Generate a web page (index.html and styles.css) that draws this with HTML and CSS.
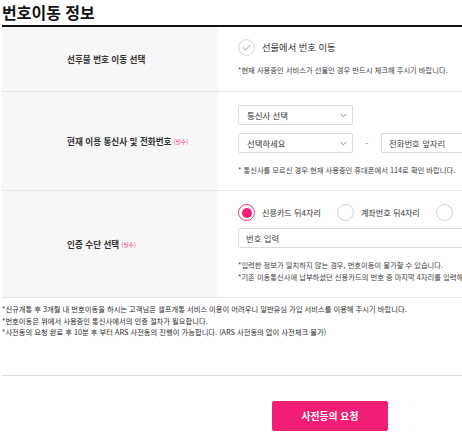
FILE: index.html
```html
<!DOCTYPE html>
<html lang="ko">
<head>
<meta charset="utf-8">
<title>번호이동 정보</title>
<link rel="stylesheet" href="styles.css">
</head>
<body>
<div class="page">
  <h2 class="title">번호이동 정보</h2>
  <div class="table">
    <div class="row">
      <div class="th">선후불 번호 이동 선택</div>
      <div class="td td-1">
        <div class="check">
          <svg class="check-icon" width="17" height="17" viewBox="0 0 17 17"><circle cx="8.5" cy="8.5" r="7.8" fill="#fff" stroke="#d4d4d4" stroke-width="1"/><path d="M5.2 8.6 L7.6 11 L11.9 6.4" fill="none" stroke="#bdbdbd" stroke-width="1.1" stroke-linecap="round" stroke-linejoin="round"/></svg>
          <span>선물에서 번호 이동</span>
        </div>
        <p class="note">*현재 사용중인 서비스가 선불인 경우 반드시 체크해 주시기 바랍니다.</p>
      </div>
    </div>
    <div class="row">
      <div class="th">현재 이용 통신사 및 전화번호 <em class="req">(필수)</em></div>
      <div class="td td-2">
        <div class="select"><span>통신사 선택</span><svg width="7" height="5" viewBox="0 0 7 5"><path d="M0.7 1 L3.5 3.8 L6.3 1" fill="none" stroke="#777" stroke-width="0.9"/></svg></div>
        <div class="phone">
          <div class="select"><span>선택하세요</span><svg width="7" height="5" viewBox="0 0 7 5"><path d="M0.7 1 L3.5 3.8 L6.3 1" fill="none" stroke="#777" stroke-width="0.9"/></svg></div>
          <span class="dash">-</span>
          <div class="input input-short">전화번호 앞자리</div>
        </div>
        <p class="note">* 통신사를 모르신 경우 현재 사용중인 휴대폰에서 114로 확인 바랍니다.</p>
      </div>
    </div>
    <div class="row">
      <div class="th">인증 수단 선택 <em class="req">(필수)</em></div>
      <div class="td td-3">
        <div class="radios">
          <div class="radio-item"><span class="radio on"></span><span>신용카드 뒤4자리</span></div>
          <div class="radio-item"><span class="radio"></span><span>계좌번호 뒤4자리</span></div>
          <div class="radio-item"><span class="radio"></span><span class="off">ARS 인증</span></div>
        </div>
        <div class="input input-long">번호 입력</div>
        <p class="note note-first">*입력한 정보가 일치하지 않는 경우, 번호이동이 불가할 수 있습니다.</p>
        <p class="note">*기존 이동통신사에 납부하셨던 신용카드의 번호 중 마지막 4자리를 입력해 주세요.</p>
      </div>
    </div>
  </div>
  <div class="foot-notes">
    <p>*신규개통 후 3개월 내 번호이동을 하시는 고객님은 셀프개통 서비스 이용이 어려우니 일반유심 가입 서비스를 이용해 주시기 바랍니다.</p>
    <p>*번호이동은 위에서 사용중인 통신사에서의 인증 절차가 필요합니다.</p>
    <p>*사전동의 요청 완료 후 10분 후 부터 ARS 사전동의 진행이 가능합니다. (ARS 사전동의 없이 사전체크 불가)</p>
  </div>
  <div class="divider"></div>
  <div class="btn-wrap"><button class="btn" type="button">사전동의 요청</button></div>
</div>
</body>
</html>
```

FILE: styles.css
```css
html { overflow: hidden; }
body {
  margin: 0;
  background: #fff;
  font-family: "Noto Sans CJK KR", "Noto Sans", sans-serif;
  color: #333;
}
.page {
  margin-left: 2px;
  width: 656px;
}
.title {
  margin: 0;
  font-size: 16px;
  line-height: 22px;
  padding-top: 1px;
  padding-bottom: 2px;
  font-weight: 700;
  color: #111;
  white-space: nowrap;
}
.table {
  border-top: 2px solid #111;
}
.row {
  display: grid;
  grid-template-columns: 216px 1fr;
  border-bottom: 1px solid #e6e6e6;
}
.th {
  background: #f7f7f7;
  display: flex;
  align-items: center;
  padding-left: 65px;
  font-size: 8.6px;
  font-weight: 700;
  color: #333;
  white-space: nowrap;
}
.req {
  font-style: normal;
  font-weight: 400;
  font-size: 5.8px;
  color: #e8336d;
  margin-left: 2px;
}
.td {
  padding: 12px 0 15px 20px;
  white-space: nowrap;
}
.td-2 { padding: 13px 0 14px 20px; }
.td-3 { padding: 13px 0 14px 20px; }
.note {
  margin: 9px 0 0;
  font-size: 7.3px;
  line-height: 12px;
  color: #3d3d3d;
}
.td-2 .note { margin-top: 11px; }
.td-3 .note { margin-top: 0; }
.td-3 .note-first { margin-top: 11px; }
.check {
  display: flex;
  align-items: center;
  height: 16px;
  gap: 7px;
  font-size: 9.3px;
  color: #333;
}
.check-icon { display: block; }
.select {
  box-sizing: border-box;
  width: 115px;
  height: 20px;
  border: 1px solid #dcdcdc;
  border-radius: 2px;
  display: flex;
  align-items: center;
  justify-content: space-between;
  padding: 0 5px 0 8px;
  font-size: 8.4px;
  color: #333;
  background: #fff;
}
.select svg { display: block; }
.phone {
  display: flex;
  align-items: center;
  margin-top: 8px;
}
.dash {
  width: 28px;
  text-align: center;
  font-size: 8px;
  color: #777;
}
.input {
  box-sizing: border-box;
  height: 20px;
  border: 1px solid #dcdcdc;
  border-radius: 2px;
  display: flex;
  align-items: center;
  padding-left: 7px;
  font-size: 8.4px;
  color: #444;
  background: #fff;
}
.input-short { width: 115px; }
.input-long { width: 300px; margin-top: 7px; }
.radios {
  display: flex;
  align-items: center;
  gap: 16px;
  height: 17px;
}
.radio-item {
  display: flex;
  align-items: center;
  gap: 7px;
  font-size: 8.1px;
  color: #333;
}
.radio-item .off { margin-left: 8px; }
.radio {
  box-sizing: border-box;
  width: 17px;
  height: 17px;
  border-radius: 50%;
  border: 1px solid #d0d0d0;
  background: #fff;
  display: flex;
  align-items: center;
  justify-content: center;
}
.radio.on {
  border: 1.5px solid #f0337a;
}
.radio.on::after {
  content: "";
  width: 10px;
  height: 10px;
  border-radius: 50%;
  background: #f01e75;
}
.foot-notes {
  padding-top: 6px;
  white-space: nowrap;
}
.foot-notes p {
  margin: 0;
  font-size: 7.3px;
  line-height: 11.5px;
  color: #2a2a2a;
}
.divider {
  margin-top: 36px;
  border-top: 1px solid #dddddd;
}
.btn-wrap {
  display: flex;
  justify-content: center;
  padding-top: 25px;
}
.btn {
  width: 116px;
  height: 30px;
  border: 0;
  border-radius: 2px;
  background: #f01e75;
  color: #fff;
  font-family: "Noto Sans CJK KR", "Noto Sans", sans-serif;
  font-size: 9.8px;
  font-weight: 700;
  padding: 0;
}
```
